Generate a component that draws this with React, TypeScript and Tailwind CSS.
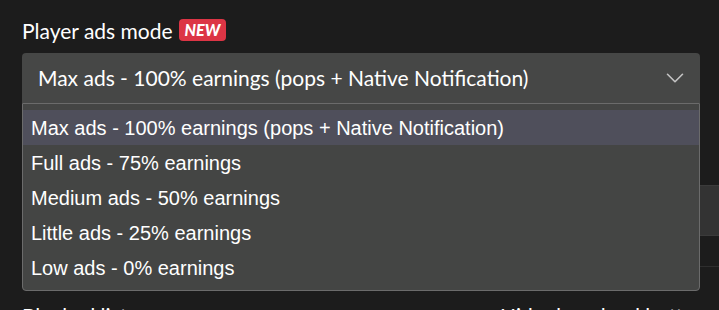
import { ChevronDown } from "lucide-react";

const options = [
  "Max ads - 100% earnings (pops + Native Notification)",
  "Full ads - 75% earnings",
  "Medium ads - 50% earnings",
  "Little ads - 25% earnings",
  "Low ads - 0% earnings",
];

export default function App() {
  return (
    <div className="h-[310px] w-[719px] overflow-hidden bg-[#1c1c1c] [font-family:Lato,sans-serif] text-white">
      <div className="relative pl-[22px] pt-[17px]">
        {/* label */}
        <div className="flex h-[26px] items-center gap-[6px]">
          <span className="text-[21px] leading-none">Player ads mode</span>
          <span className="rounded-[4px] bg-[#dc3545] px-[6px] py-[3px] text-[16px] font-black italic leading-[16px]">
            NEW
          </span>
        </div>

        {/* select */}
        <div className="mt-[10px] flex h-[50px] w-[678px] items-center justify-between rounded-t-[4px] bg-[#464746] pl-[16px] pr-[10px]">
          <span className="text-[21px]">{options[0]}</span>
          <ChevronDown size={30} strokeWidth={1.3} className="text-[#c4c4c4]" />
        </div>

        {/* content underneath the open menu */}
        <div className="mt-[82px] h-[51px] border-y border-[#3b3b3b] bg-[#333333]" />
        <div className="mt-[30px] border-t border-[#2e2e2e]" />
        <div className="mt-[38px] flex text-[21px] leading-none">
          <span className="w-[478px]">Blocked list</span>
          <span>Hide download button</span>
        </div>

        {/* open dropdown menu */}
        <div className="absolute left-[22px] top-[103px] h-[188px] w-[678px] rounded-b-[4px] border border-[#6b6b6b] bg-[#444544] pt-[6px] [font-family:Arial,sans-serif]">
          {options.map((o, i) => (
            <div
              key={o}
              className={
                "flex h-[35px] items-center pl-[8px] text-[20px] " +
                (i === 0 ? "bg-[#4f4f5b]" : "")
              }
            >
              {o}
            </div>
          ))}
        </div>
      </div>
    </div>
  );
}
